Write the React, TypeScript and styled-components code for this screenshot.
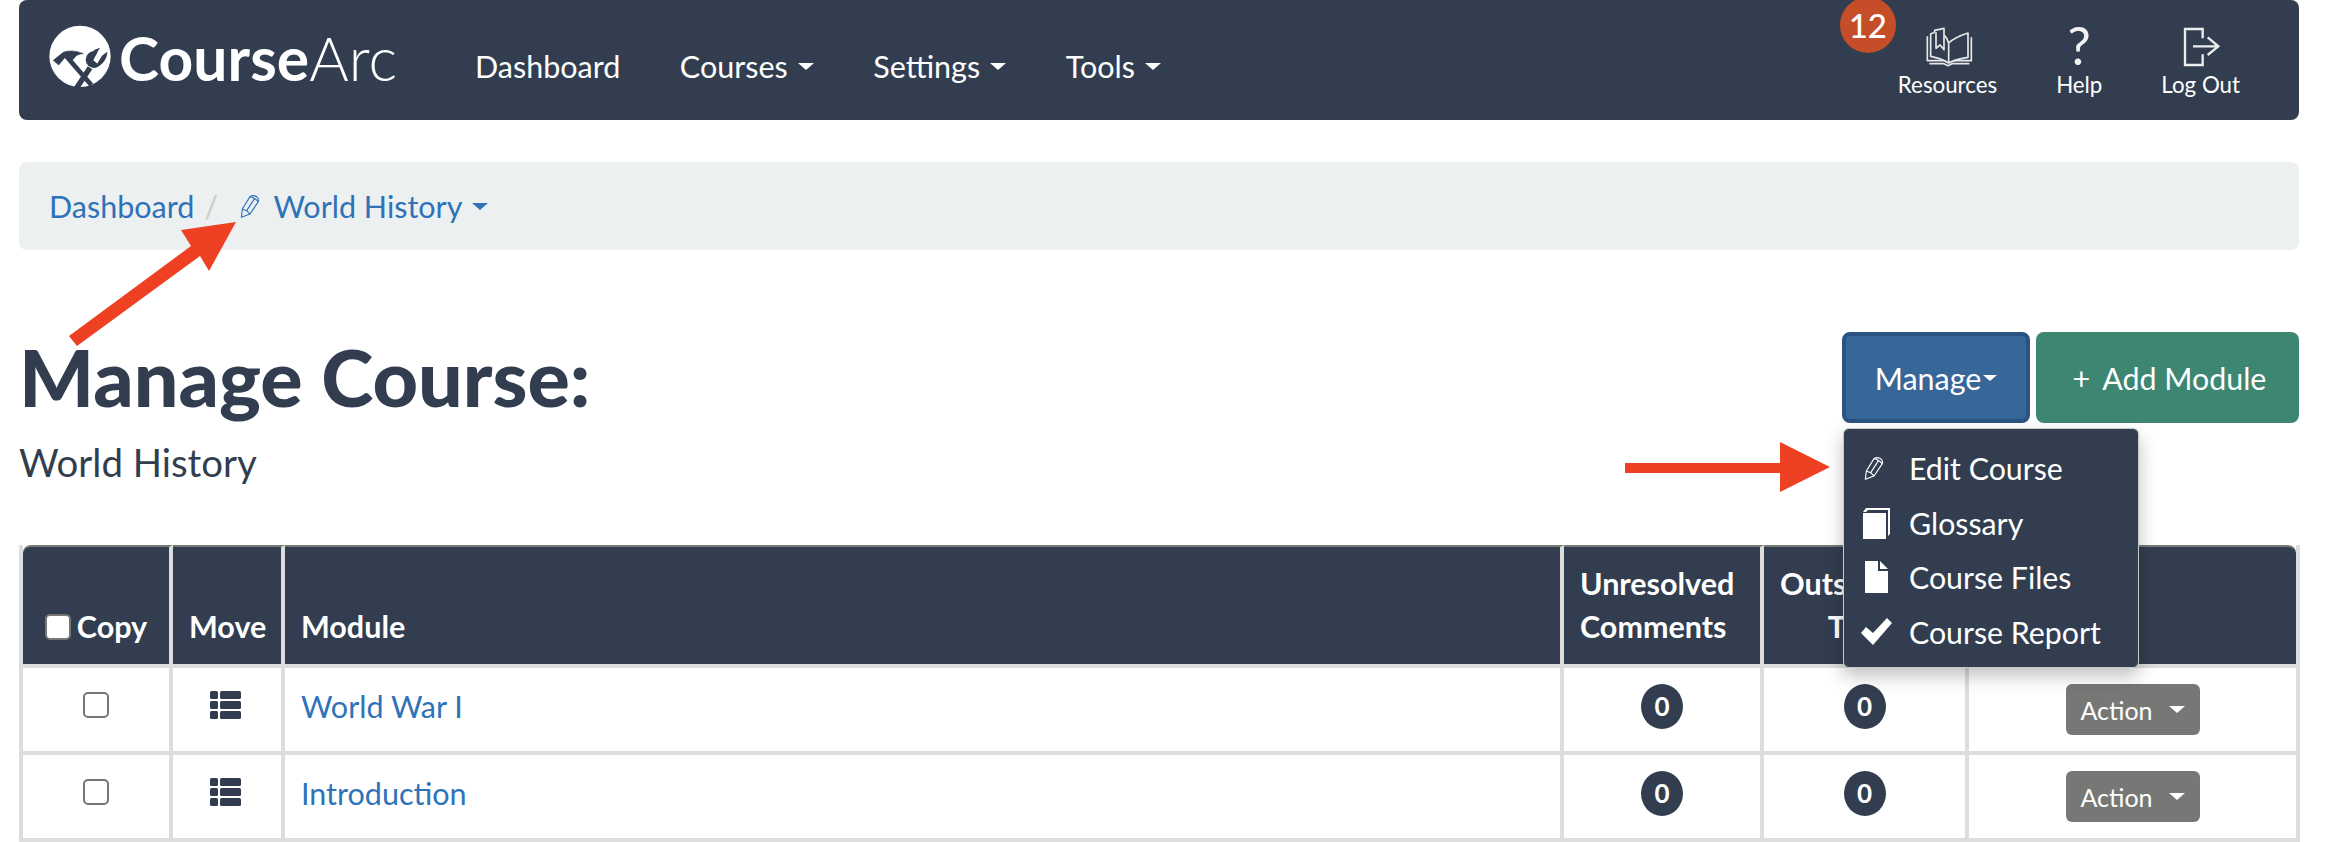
import React, { FC } from 'react';
import styled, { createGlobalStyle } from 'styled-components';

const navy = '#323e50';
const linkBlue = '#2f72b8';
const arrowRed = '#ee4023';

const GlobalStyle = createGlobalStyle`
  html, body {
    margin: 0;
    padding: 0;
    height: 842px;
    overflow: hidden;
    background: #ffffff;
    font-family: Lato, "Open Sans", sans-serif;
    color: ${navy};
  }
`;

const Page = styled.div`
  position: relative;
  width: 2326px;
  height: 842px;
  padding: 0 27px 0 19px;
  box-sizing: border-box;
  overflow: hidden;
`;

const Navbar = styled.nav`
  display: flex;
  align-items: center;
  height: 120px;
  padding: 0 59px 0 25px;
  border-radius: 8px;
  background: ${navy};
  color: #ffffff;
`;

const Logo = styled.a`
  display: flex;
  align-items: center;
  width: 351px;
  margin-right: 80px;
  margin-top: -4px;
`;

const LogoMark = styled.svg`
  width: 72px;
  height: 70px;
  flex: none;
  margin-right: 3px;
`;

const LogoText = styled.span`
  font-size: 60.5px;
  line-height: 1;
  font-weight: 700;
  letter-spacing: 0.1px;
`;

const LogoLight = styled.span`
  font-weight: 300;
`;

const NavLinks = styled.div`
  display: flex;
  gap: 59.5px;
  margin-top: 12px;
`;

const NavLink = styled.a`
  display: flex;
  align-items: center;
  gap: 10px;
  font-size: 30.5px;
  line-height: 40px;
  white-space: nowrap;
`;

const Caret = styled.span<{ $size?: number }>`
  display: inline-block;
  width: 0;
  height: 0;
  border-top: ${p => (p.$size ?? 8) * 0.95}px solid currentColor;
  border-left: ${p => p.$size ?? 8}px solid transparent;
  border-right: ${p => p.$size ?? 8}px solid transparent;
`;

const NavTools = styled.div`
  display: flex;
  gap: 59px;
  margin-left: auto;
  align-self: flex-start;
`;

const ToolItem = styled.a`
  position: relative;
  display: flex;
  flex-direction: column;
  align-items: center;
  font-size: 22.3px;
  color: #ffffff;
  white-space: nowrap;
`;

const ToolIcon = styled.div`
  display: flex;
  align-items: center;
  justify-content: center;
  height: 52px;
  margin-top: 19px;
`;

const ToolLabel = styled.span`
  line-height: 28px;
`;

const HelpMark = styled.span`
  font-size: 52px;
  line-height: 52px;
  font-weight: 400;
  color: #f2f2f2;
`;

const Badge = styled.span`
  position: absolute;
  left: -58px;
  top: -3px;
  width: 56px;
  height: 56px;
  border-radius: 50%;
  background: #c54d27;
  color: #ffffff;
  font-size: 33px;
  font-weight: 500;
  line-height: 56px;
  text-align: center;
`;

const Breadcrumb = styled.div`
  display: flex;
  align-items: center;
  height: 88px;
  margin-top: 42px;
  padding-left: 30px;
  border-radius: 8px;
  background: #ecf0f1;
  font-size: 30.5px;
  color: ${linkBlue};
`;

const Crumb = styled.a`
  display: flex;
  align-items: center;
  gap: 10px;
`;

const Separator = styled.span`
  margin: 0 22px 0 10px;
  color: #cccccc;
`;

const CrumbIcon = styled.svg`
  width: 20px;
  height: 25px;
  margin-right: 6px;
`;

const HeadingRow = styled.div`
  display: flex;
  justify-content: space-between;
  height: 213px;
  margin-top: 82px;
`;

const Title = styled.h1`
  margin: 0;
  font-size: 79px;
  line-height: 90px;
  font-weight: 900;
  color: ${navy};
`;

const Subtitle = styled.div`
  margin-top: 18px;
  font-size: 38.4px;
  line-height: 44px;
`;

const HeadingActions = styled.div`
  position: relative;
  display: flex;
  gap: 6px;
  height: 91px;
`;

const ActionButton = styled.button<{ $variant: 'manage' | 'add' }>`
  display: flex;
  align-items: center;
  justify-content: center;
  box-sizing: border-box;
  width: ${p => (p.$variant === 'manage' ? 188 : 263)}px;
  height: 91px;
  gap: ${p => (p.$variant === 'manage' ? 2 : 12)}px;
  padding: ${p => (p.$variant === 'manage' ? '0' : '0 0 0 4px')};
  border: ${p => (p.$variant === 'manage' ? '4px solid #2a5382' : 'none')};
  border-radius: 8px;
  background: ${p => (p.$variant === 'manage' ? '#376799' : '#3c8672')};
  color: #ffffff;
  font-family: inherit;
  font-size: 30.4px;
`;

const Menu = styled.ul`
  position: absolute;
  left: 1px;
  top: 96px;
  z-index: 5;
  box-sizing: border-box;
  width: 296px;
  height: 240px;
  margin: 0;
  padding: 12px 0 0;
  list-style: none;
  border: 1px solid #c9c9c9;
  border-radius: 6px;
  background: ${navy};
  box-shadow: 0 8px 18px rgba(0, 0, 0, 0.25);
  color: #ffffff;
  font-size: 30.3px;
`;

const MenuItem = styled.li`
  display: flex;
  align-items: center;
  height: 54.5px;
`;

const MenuIcon = styled.span`
  display: flex;
  justify-content: center;
  width: 65px;
`;

const GlyphSvg = styled.svg`
  display: block;
`;

const Table = styled.table`
  position: relative;
  width: 2281px;
  table-layout: fixed;
  border-collapse: separate;
  border-spacing: 0;
  border-left: 4px solid #dddddd;
  border-right: 4px solid #dddddd;
`;

const HeaderCell = styled.th<{ $align?: string }>`
  box-sizing: border-box;
  height: 123px;
  padding: 0 16px 16px;
  vertical-align: bottom;
  background: ${navy};
  color: #ffffff;
  font-size: 30.5px;
  line-height: 43px;
  font-weight: 700;
  text-align: ${p => p.$align ?? 'center'};
  border-top: 2px solid #777777;
  border-right: 4px solid #dddddd;
  border-bottom: 4px solid #dddddd;
  &:first-child { border-top-left-radius: 8px; }
  &:last-child { border-top-right-radius: 8px; border-right: none; }
`;

const BodyCell = styled.td<{ $align?: string }>`
  box-sizing: border-box;
  height: 87px;
  padding: 16px 16px 0;
  vertical-align: top;
  text-align: ${p => p.$align ?? 'center'};
  border-right: 4px solid #dddddd;
  border-bottom: 4px solid #dddddd;
  &:last-child { border-right: none; }
`;

const HeaderCopy = styled.label`
  display: flex;
  align-items: center;
  justify-content: center;
  gap: 6px;
`;

const Check = styled.input<{ $filled?: boolean }>`
  appearance: none;
  display: block;
  box-sizing: border-box;
  width: 26px;
  height: 26px;
  margin: ${p => (p.$filled ? '0' : '8px auto 0')};
  border: 2px solid #767676;
  border-radius: 5px;
  background: #ffffff;
`;

const MoveIcon = styled.svg`
  display: block;
  width: 31px;
  height: 28px;
  margin: 7px auto 0;
  transform: translateX(-2px);
`;

const ModuleLink = styled.a`
  display: block;
  font-size: 30.5px;
  line-height: 44px;
  color: ${linkBlue};
`;

const CountBadge = styled.span`
  display: inline-block;
  width: 42px;
  height: 45px;
  border-radius: 50%;
  background: ${navy};
  color: #ffffff;
  font-size: 26px;
  font-weight: 700;
  line-height: 45px;
  text-align: center;
`;

const RowAction = styled.button`
  display: inline-flex;
  align-items: center;
  justify-content: center;
  gap: 16px;
  width: 134px;
  height: 51px;
  padding: 0;
  border: none;
  border-radius: 6px;
  background: #777876;
  color: #ffffff;
  font-family: inherit;
  font-size: 25px;
`;

const Overlay = styled.svg`
  position: absolute;
  left: 0;
  top: 0;
  z-index: 10;
  pointer-events: none;
`;

const PencilShape: FC = () => (
  <g fill="none" stroke="currentColor" strokeWidth="3.4" strokeLinejoin="round">
    <path d="M4 70 L7 45 L30 8 Q38 2 48 7 Q58 13 55 23 L30 60 Z" />
    <path d="M30 8 Q42 10 55 23" />
    <path d="M7 45 L20 50 L30 60" />
    <path d="M20 50 L44 13" />
  </g>
);

const Logomark: FC = () => (
  <LogoMark viewBox="0 0 216 210">
    <circle cx="108" cy="100" r="92" fill="#ffffff" />
    <g fill={navy} stroke={navy}>
      <path d="M28 112 L58 88 Q85 78 118 92 Q98 92 90 106 L78 120 L62 104 L44 126 Z" strokeWidth="2" />
      <path d="M76 110 L142 186" strokeWidth="14" fill="none" />
      <path d="M92 204 L138 134" strokeWidth="16" fill="none" />
      <circle cx="150" cy="110" r="25" strokeWidth="0" />
    </g>
    <path d="M148 112 L168 72 L196 90 L162 124 Z" fill="#ffffff" />
    <path d="M174 98 L190 86 Q190 106 174 122 L152 134 Z" fill={navy} />
    <path d="M152 80 L168 74 L150 104 L140 92 Z" fill={navy} />
  </LogoMark>
);

const BookIcon: FC = () => (
  <GlyphSvg width="60" height="52" viewBox="0 0 180 156" fill="none" stroke="#e8e8e8" strokeWidth="5" strokeLinejoin="round">
    <path d="M92 72 Q110 55 150 42 V115 Q115 120 92 132 Z" />
    <path d="M92 72 Q88 58 80 50 M92 132 Q70 118 38 112 V45 L50 40" />
    <path d="M50 40 V34 L78 28 V92 L66 78 L54 88 V40" />
    <path d="M160 55 V125 H108 M28 52 V125 H76" />
    <path d="M34 134 H78 L90 140 L102 134 H154" />
  </GlyphSvg>
);

const LogoutIcon: FC = () => (
  <GlyphSvg width="60" height="52" viewBox="0 0 180 156" fill="none" stroke="#ededed" strokeWidth="7">
    <path d="M95 58 V30 H42 V138 H95 V106" />
    <path d="M66 82 H140 M110 55 L142 82 L110 108" />
  </GlyphSvg>
);

const GlossaryIcon: FC = () => (
  <GlyphSvg width="30" height="32" viewBox="0 0 30 32" fill="#ffffff">
    <path d="M1 5 L4 1 H28 V27 L26 29 V3 H6 L4 5 Z" />
    <path d="M1 6 H24 V32 H1 Z" />
  </GlyphSvg>
);

const FileIcon: FC = () => (
  <GlyphSvg width="24" height="32" viewBox="0 0 24 32" fill="#ffffff">
    <path d="M0 0 H13 V10 H23 V32 H0 Z" />
    <path d="M15 0 L23 8 H15 Z" />
  </GlyphSvg>
);

const CheckIcon: FC = () => (
  <GlyphSvg width="31" height="27" viewBox="0 0 31 27" fill="#ffffff">
    <path d="M0 15 L5 9 L12 15 L26 0 L31 5 L12 27 Z" />
  </GlyphSvg>
);

const modules = ['World War I', 'Introduction'];

const App: FC = () => (
  <Page>
    <GlobalStyle />
    <Navbar>
      <Logo>
        <Logomark />
        <LogoText>Course<LogoLight>Arc</LogoLight></LogoText>
      </Logo>
      <NavLinks>
        <NavLink>Dashboard</NavLink>
        <NavLink>Courses <Caret /></NavLink>
        <NavLink>Settings <Caret /></NavLink>
        <NavLink>Tools <Caret /></NavLink>
      </NavLinks>
      <NavTools>
        <ToolItem>
          <Badge>12</Badge>
          <ToolIcon><BookIcon /></ToolIcon>
          <ToolLabel>Resources</ToolLabel>
        </ToolItem>
        <ToolItem>
          <ToolIcon><HelpMark>?</HelpMark></ToolIcon>
          <ToolLabel>Help</ToolLabel>
        </ToolItem>
        <ToolItem>
          <ToolIcon><LogoutIcon /></ToolIcon>
          <ToolLabel>Log Out</ToolLabel>
        </ToolItem>
      </NavTools>
    </Navbar>

    <Breadcrumb>
      <a>Dashboard</a>
      <Separator>/</Separator>
      <CrumbIcon viewBox="0 0 60 75"><PencilShape /></CrumbIcon>
      <Crumb>&nbsp;World History <Caret /></Crumb>
    </Breadcrumb>

    <HeadingRow>
      <div>
        <Title>Manage Course:</Title>
        <Subtitle>World History</Subtitle>
      </div>
      <HeadingActions>
        <ActionButton $variant="manage">Manage<Caret $size={7} /></ActionButton>
        <ActionButton $variant="add"><span>+</span>Add Module</ActionButton>
        <Menu>
          <MenuItem>
            <MenuIcon><CrumbIcon viewBox="0 0 60 75"><PencilShape /></CrumbIcon></MenuIcon>
            Edit Course
          </MenuItem>
          <MenuItem><MenuIcon><GlossaryIcon /></MenuIcon>Glossary</MenuItem>
          <MenuItem><MenuIcon><FileIcon /></MenuIcon>Course Files</MenuItem>
          <MenuItem><MenuIcon><CheckIcon /></MenuIcon>Course Report</MenuItem>
        </Menu>
      </HeadingActions>
    </HeadingRow>

    <Table>
      <colgroup>
        <col width="150" />
        <col width="112" />
        <col width="1279" />
        <col width="200" />
        <col width="205" />
        <col width="327" />
      </colgroup>
      <thead>
        <tr>
          <HeaderCell>
            <HeaderCopy><Check type="checkbox" $filled />Copy</HeaderCopy>
          </HeaderCell>
          <HeaderCell>Move</HeaderCell>
          <HeaderCell $align="left">Module</HeaderCell>
          <HeaderCell $align="left">Unresolved Comments</HeaderCell>
          <HeaderCell>Outstanding Tasks</HeaderCell>
          <HeaderCell />
        </tr>
      </thead>
      <tbody>
        {modules.map(name => (
          <tr key={name}>
            <BodyCell><Check type="checkbox" /></BodyCell>
            <BodyCell>
              <MoveIcon viewBox="0 0 31 28" fill={navy}>
                <rect x="0" y="0" width="8" height="8" rx="1.5" />
                <rect x="10" y="0" width="21" height="8" rx="1.5" />
                <rect x="0" y="10" width="8" height="8" rx="1.5" />
                <rect x="10" y="10" width="21" height="8" rx="1.5" />
                <rect x="0" y="20" width="8" height="8" rx="1.5" />
                <rect x="10" y="20" width="21" height="8" rx="1.5" />
              </MoveIcon>
            </BodyCell>
            <BodyCell $align="left"><ModuleLink>{name}</ModuleLink></BodyCell>
            <BodyCell><CountBadge>0</CountBadge></BodyCell>
            <BodyCell><CountBadge>0</CountBadge></BodyCell>
            <BodyCell><RowAction>Action <Caret /></RowAction></BodyCell>
          </tr>
        ))}
      </tbody>
    </Table>

    <Overlay width="2326" height="842" viewBox="0 0 2326 842">
      <path d="M69 336 L191 246 L181 230 L236 222 L209 271 L200 256 L77 346 Z" fill={arrowRed} />
      <path d="M1625 463 H1780 V442 L1830 467 L1780 492 V473 H1625 Z" fill={arrowRed} />
    </Overlay>
  </Page>
);

export default App;
